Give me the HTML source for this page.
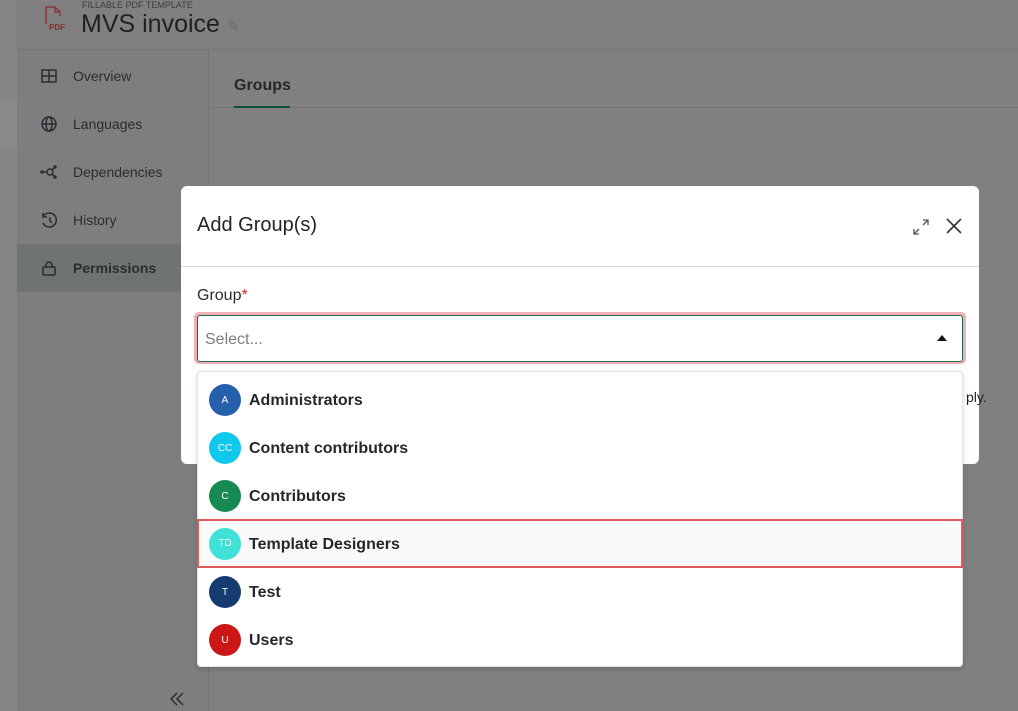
<!DOCTYPE html>
<html><head><style>
*{box-sizing:border-box;margin:0;padding:0}
body{width:1018px;height:711px;overflow:hidden;background:#808080;font-family:"Liberation Sans",sans-serif;position:relative;color:#1f2328}
.abs{position:absolute}
.nav{position:absolute;left:40px;font-size:14px;color:#2a2d30;display:flex;align-items:center;gap:15px}
.nav svg{width:18px;height:18px}
.item{position:absolute;left:0;width:766px;height:48px;display:flex;align-items:center;padding-left:11px;font-size:16px;font-weight:bold;color:#25282b}
.item span{position:relative;top:1px}
.av{width:32px;height:32px;border-radius:50%;color:#fff;font-size:10px;display:flex;align-items:center;justify-content:center;margin-right:8px;font-weight:normal}
</style></head><body>
<div class="abs" style="left:0;top:0;width:17px;height:711px;background:#858585"></div>
<div class="abs" style="left:0;top:100px;width:17px;height:48px;background:#878a88"></div>
<div class="abs" style="left:17px;top:0;width:1001px;height:50px;background:#808080;border-bottom:1px solid #747474"></div>
<div class="abs" style="left:17px;top:51px;width:192px;height:660px;background:#7d7e7f;border-right:1px solid #747474"></div>
<div class="abs" style="left:17px;top:244px;width:192px;height:48px;background:#6f7471"></div>
<svg class="abs" style="left:44px;top:6px" width="26" height="26" viewBox="0 0 26 26" fill="none" stroke="#8f2a2a" stroke-width="1.3"><path d="M2 18V1h9l5 5v4M11 1v5h5"/><text x="5" y="24" font-size="8" fill="#8f2a2a" stroke="none" font-family="Liberation Sans" font-weight="bold">PDF</text></svg>
<div class="abs" style="left:82px;top:0;font-size:9px;color:#3a3d40">FILLABLE PDF TEMPLATE</div>
<div class="abs" style="left:81px;top:10px;font-size:25px;color:#1e2124">MVS invoice <span style="font-size:16px;color:#6a6a6a">✎</span></div>
<div class="nav" style="top:67px"><svg viewBox="0 0 18 18" fill="none" stroke="#2a2d30" stroke-width="1.5"><rect x="2" y="3" width="14" height="12"/><path d="M9 3v12M2 9h14"/></svg><span>Overview</span></div>
<div class="nav" style="top:115px"><svg viewBox="0 0 18 18" fill="none" stroke="#2a2d30" stroke-width="1.5"><circle cx="9" cy="9" r="7"/><ellipse cx="9" cy="9" rx="3" ry="7"/><path d="M2 9h14"/></svg><span>Languages</span></div>
<div class="nav" style="top:163px"><svg viewBox="0 0 18 18" fill="none" stroke="#2a2d30" stroke-width="1.5"><circle cx="10" cy="9" r="3"/><path d="M3 9h4M12 7l3-3M12 11l3 3"/><circle cx="2" cy="9" r="1" fill="#2a2d30"/><circle cx="15" cy="4" r="1" fill="#2a2d30"/><circle cx="15" cy="14" r="1" fill="#2a2d30"/></svg><span>Dependencies</span></div>
<div class="nav" style="top:211px"><svg viewBox="0 0 18 18" fill="none" stroke="#2a2d30" stroke-width="1.5"><path d="M3 6a7 7 0 1 1 0 6M3 2v4h4M10 6v4l2 2"/></svg><span>History</span></div>
<div class="nav" style="top:259px;font-weight:bold"><svg viewBox="0 0 18 18" fill="none" stroke="#2a2d30" stroke-width="1.5"><rect x="3" y="8" width="12" height="8" rx="1"/><path d="M6 8V6a3 3 0 0 1 6 0v2"/></svg><span>Permissions</span></div>
<svg class="abs" style="left:169px;top:692px" width="16" height="14" viewBox="0 0 16 14" fill="none" stroke="#2a2d30" stroke-width="1.5"><path d="M8 1L2 7l6 6M14 1L8 7l6 6"/></svg>
<div class="abs" style="left:209px;top:107px;width:809px;height:1px;background:#747474"></div>
<div class="abs" style="left:234px;top:77px;font-size:16px;font-weight:bold;color:#25282b">Groups</div>
<div class="abs" style="left:234px;top:106px;width:56px;height:2px;background:#0e4f3e"></div>
<div class="abs" style="left:181px;top:186px;width:798px;height:278px;background:#fff;border-radius:6px"></div>
<div class="abs" style="left:181px;top:266px;width:798px;height:1px;background:#dcdde0"></div>
<div class="abs" style="left:197px;top:214px;font-size:20px;color:#212529">Add Group(s)</div>
<svg class="abs" style="left:911px;top:217px" width="20" height="20" viewBox="0 0 20 20" fill="none" stroke="#555" stroke-width="1.3"><path d="M12 3h5v5M17 3l-5 5M8 17H3v-5M3 17l5-5"/></svg>
<svg class="abs" style="left:945px;top:217px" width="18" height="18" viewBox="0 0 18 18" stroke="#333" stroke-width="1.6"><path d="M2 2l14 14M16 2L2 16"/></svg>
<div class="abs" style="left:197px;top:287px;font-size:16px;color:#2a2d30">Group<span style="color:#d32f2f">*</span></div>
<div class="abs" style="left:194px;top:312px;width:772px;height:52px;border-radius:5px;background:#f1b0b4"></div>
<div class="abs" style="left:197px;top:315px;width:766px;height:47px;border:1px solid #1c6b52;border-radius:3px;background:#fff"></div>
<div class="abs" style="left:205px;top:331px;font-size:16px;color:#7a7d80">Select...</div>
<div class="abs" style="left:937px;top:335px;width:0;height:0;border-left:5px solid transparent;border-right:5px solid transparent;border-bottom:6px solid #111"></div>
<div class="abs" style="left:966px;top:389px;font-size:14px;color:#222">ply.</div>
<div class="abs" style="left:197px;top:371px;width:766px;height:296px;background:#fff;border-radius:4px;border:1px solid #e2e3e5;box-shadow:0 2px 6px rgba(0,0,0,.15)">
<div class="item" style="top:4px"><div class="av" style="background:#2660ab">A</div><span>Administrators</span></div>
<div class="item" style="top:52px"><div class="av" style="background:#10c8ec">CC</div><span>Content contributors</span></div>
<div class="item" style="top:100px"><div class="av" style="background:#178a52">C</div><span>Contributors</span></div>
<div class="item" style="top:147px;left:-1px;height:49px;background:#f8f9f8;border:2px solid #e05a5e;padding-left:10px"><div class="av" style="background:#3fe0d6">TD</div><span>Template Designers</span></div>
<div class="item" style="top:196px"><div class="av" style="background:#163b70">T</div><span>Test</span></div>
<div class="item" style="top:244px"><div class="av" style="background:#cc1717">U</div><span>Users</span></div>
</div>
</body></html>
